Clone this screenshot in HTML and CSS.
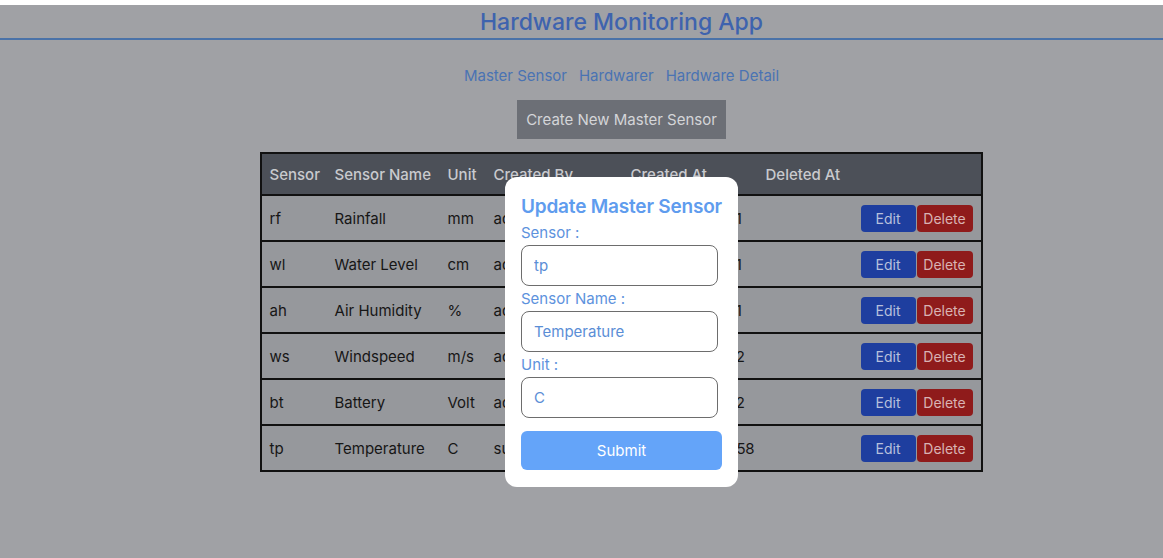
FILE: index.html
```html
<!DOCTYPE html>
<html lang="en">
<head>
<meta charset="utf-8">
<title>Hardware Monitoring App</title>
<link rel="stylesheet" href="styles.css">
</head>
<body>
<div class="page">
  <header class="app-header">
    <h1 class="app-title">Hardware Monitoring App</h1>
  </header>
  <main class="content">
    <nav class="nav">
      <a class="nav-link" href="#">Master Sensor</a>
      <a class="nav-link" href="#">Hardwarer</a>
      <a class="nav-link" href="#">Hardware Detail</a>
    </nav>
    <div class="actions">
      <button class="btn-create">Create New Master Sensor</button>
    </div>
    <div class="table-wrap">
      <table class="sensor-table">
        <thead>
          <tr>
            <th class="c1">Sensor</th>
            <th class="c2">Sensor Name</th>
            <th class="c3">Unit</th>
            <th class="c4">Created By</th>
            <th class="c5">Created At</th>
            <th class="c6">Deleted At</th>
            <th class="c7"></th>
          </tr>
        </thead>
        <tbody>
          <tr><td>rf</td><td>Rainfall</td><td>mm</td><td>admin</td><td class="date">2023-06-12 9:11</td><td></td><td class="act"><button class="btn-edit">Edit</button><button class="btn-del">Delete</button></td></tr>
          <tr><td>wl</td><td>Water Level</td><td>cm</td><td>admin</td><td class="date">2023-06-12 9:11</td><td></td><td class="act"><button class="btn-edit">Edit</button><button class="btn-del">Delete</button></td></tr>
          <tr><td>ah</td><td>Air Humidity</td><td>%</td><td>admin</td><td class="date">2023-06-12 9:11</td><td></td><td class="act"><button class="btn-edit">Edit</button><button class="btn-del">Delete</button></td></tr>
          <tr><td>ws</td><td>Windspeed</td><td>m/s</td><td>admin</td><td class="date">2023-06-12 9:12</td><td></td><td class="act"><button class="btn-edit">Edit</button><button class="btn-del">Delete</button></td></tr>
          <tr><td>bt</td><td>Battery</td><td>Volt</td><td>admin</td><td class="date">2023-06-12 9:12</td><td></td><td class="act"><button class="btn-edit">Edit</button><button class="btn-del">Delete</button></td></tr>
          <tr><td>tp</td><td>Temperature</td><td>C</td><td>superadmin</td><td class="date">2023-06-14 10:58</td><td></td><td class="act"><button class="btn-edit">Edit</button><button class="btn-del">Delete</button></td></tr>
        </tbody>
      </table>
    </div>
  </main>

  <div class="modal">
    <h2 class="modal-title">Update Master Sensor</h2>
    <label class="field-label">Sensor :</label>
    <input class="field-input" type="text" value="tp">
    <label class="field-label">Sensor Name :</label>
    <input class="field-input" type="text" value="Temperature">
    <label class="field-label">Unit :</label>
    <input class="field-input" type="text" value="C">
    <button class="btn-submit">Submit</button>
  </div>
</div>
</body>
</html>
```

FILE: styles.css
```css
* { box-sizing: border-box; }
html, body { margin: 0; padding: 0; }
body {
  background: #ffffff;
  padding-top: 5px;
  font-family: Inter, "Noto Sans", sans-serif;
}
.page {
  position: relative;
  background: #a0a1a5;
  min-height: 553px;
  padding-bottom: 20px;
}
.app-header {
  border-bottom: 2px solid #4a72a8;
  height: 35px;
  display: flex;
  align-items: center;
  justify-content: center;
  padding-left: 80px;
}
.app-title {
  margin: 0;
  padding-top: 2px;
  font-size: 23px;
  font-weight: 500;
  color: #3e63ae;
  line-height: 33px;
}
.content {
  padding-left: 80px;
}
.nav {
  display: flex;
  justify-content: center;
  gap: 12px;
  margin-top: 26px;
}
.nav-link {
  color: #4a73b3;
  text-decoration: none;
  font-size: 15px;
  line-height: 20px;
}
.actions {
  display: flex;
  justify-content: center;
  margin-top: 14px;
}
.btn-create {
  background: #6c6f76;
  color: #d4d5d8;
  border: none;
  font-family: inherit;
  font-size: 15px;
  width: 209px;
  height: 39px;
  padding: 0;
}
.table-wrap {
  display: flex;
  justify-content: center;
  margin-top: 13px;
}
.sensor-table {
  border-collapse: collapse;
  border: 2px solid #111;
  width: 723px;
  font-size: 15px;
  margin-left: -1px;
}
.sensor-table th {
  background: #4c5058;
  color: #c9cace;
  font-weight: 500;
  text-align: left;
  height: 42px;
  padding: 0 0 0 8px;
  border-bottom: 2px solid #111;
}
.sensor-table td {
  background: #96989c;
  color: #161616;
  height: 46px;
  padding: 0 0 0 8px;
  border-bottom: 2px solid #111;
  white-space: nowrap;
}
.sensor-table td.date {
  letter-spacing: -0.25px;
}
.c1 { width: 66px; }
.c2 { width: 113px; }
.c3 { width: 46px; }
.c4 { width: 137px; }
.c5 { width: 135px; }
.c6 { width: 94px; }
.sensor-table td.act {
  text-align: right;
  padding-right: 8px;
  font-size: 0;
}
.btn-edit, .btn-del {
  border: none;
  font-family: inherit;
  font-size: 14px;
  height: 27px;
  border-radius: 4px;
  vertical-align: middle;
  padding: 0;
}
.btn-edit {
  background: #1e3e9f;
  color: #b7c0dc;
  width: 55px;
  margin-right: 1px;
}
.btn-del {
  background: #8f1b1b;
  color: #d9b3b3;
  width: 56px;
}
.modal {
  position: absolute;
  left: 505px;
  top: 172px;
  width: 233px;
  height: 310px;
  background: #ffffff;
  border-radius: 12px;
  padding: 17px 16px 16px;
  display: flex;
  flex-direction: column;
  align-items: flex-start;
}
.modal-title {
  margin: 0 0 3px 0;
  font-size: 19px;
  font-weight: 600;
  color: #5f9cee;
  line-height: 26px;
  white-space: nowrap;
  letter-spacing: -0.2px;
}
.field-label {
  font-size: 15px;
  line-height: 20px;
  color: #5d92dd;
  margin-bottom: 2px;
}
.field-input {
  width: 197px;
  height: 41px;
  border: 1px solid #6d6d6d;
  border-radius: 8px;
  padding: 0 12px;
  font-family: inherit;
  font-size: 15px;
  color: #5b8ed6;
  margin-bottom: 3px;
  outline: none;
}
.btn-submit {
  margin-top: 10px;
  width: 201px;
  height: 39px;
  border: none;
  border-radius: 6px;
  background: #64a4f9;
  color: #ffffff;
  font-family: inherit;
  font-size: 15px;
}
```
